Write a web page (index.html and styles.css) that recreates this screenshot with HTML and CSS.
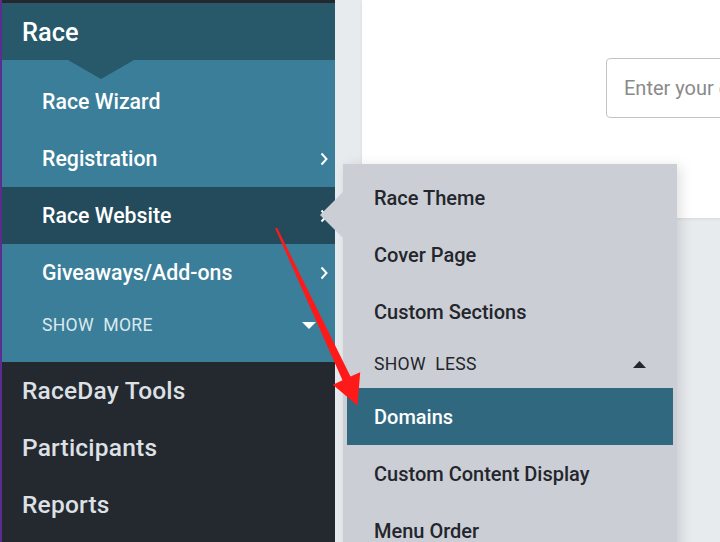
FILE: index.html
```html
<!DOCTYPE html>
<html>
<head>
<meta charset="utf-8">
<link rel="stylesheet" href="styles.css">
</head>
<body>
<div class="app">
  <nav class="sidebar">
    <div class="topstrip"></div>
    <div class="group-head">Race</div>
    <ul class="submenu">
      <li class="sub-item">Race Wizard</li>
      <li class="sub-item">Registration
        <svg class="chev" width="8" height="14" viewBox="0 0 8 14"><path d="M1.5 1.5 L6.5 7 L1.5 12.5" fill="none" stroke="#fff" stroke-width="2"/></svg>
      </li>
      <li class="sub-item active">Race Website
        <svg class="chev" width="8" height="14" viewBox="0 0 8 14"><path d="M1.5 1.5 L6.5 7 L1.5 12.5" fill="none" stroke="#fff" stroke-width="2"/></svg>
      </li>
      <li class="sub-item">Giveaways/Add-ons
        <svg class="chev" width="8" height="14" viewBox="0 0 8 14"><path d="M1.5 1.5 L6.5 7 L1.5 12.5" fill="none" stroke="#fff" stroke-width="2"/></svg>
      </li>
      <li class="sub-toggle">SHOW&nbsp; MORE
        <svg class="caret" width="14" height="7" viewBox="0 0 14 7"><path d="M0 0 L14 0 L7 7 Z" fill="#fff"/></svg>
      </li>
    </ul>
    <ul class="mainmenu">
      <li class="main-item">RaceDay Tools</li>
      <li class="main-item">Participants</li>
      <li class="main-item">Reports</li>
    </ul>
  </nav>
  <main class="content">
    <section class="card">
      <div class="field"><span class="placeholder">Enter your email address</span></div>
    </section>
  </main>
</div>

<div class="flyout">
  <ul class="fly-list">
    <li class="fly-item">Race Theme</li>
    <li class="fly-item">Cover Page</li>
    <li class="fly-item">Custom Sections</li>
    <li class="fly-toggle">SHOW&nbsp; LESS
      <svg class="caret" width="13" height="7" viewBox="0 0 13 7"><path d="M0 7 L13 7 L6.5 0 Z" fill="#23262c"/></svg>
    </li>
    <li class="fly-item current">Domains</li>
    <li class="fly-item">Custom Content Display</li>
    <li class="fly-item">Menu Order</li>
  </ul>
</div>

<svg class="arrow" width="720" height="542" viewBox="0 0 720 542">
  <polygon points="275.2,228.4 277.0,227.6 350.5,376.6 360.2,372.2 357.5,405.5 332.8,384.8 342.5,380.2" fill="#ff1a1a"/>
</svg>
</body>
</html>
```

FILE: styles.css
```css
* { box-sizing: border-box; }
html, body { margin: 0; padding: 0; }
body {
  width: 720px;
  height: 542px;
  overflow: hidden;
  position: relative;
  font-family: Roboto, "Liberation Sans", sans-serif;
  background: #e8ebee;
}
ul { list-style: none; margin: 0; padding: 0; }

.app {
  display: flex;
  height: 542px;
}

.sidebar {
  width: 335px;
  flex: none;
  border-left: 2px solid #5a2d8e;
  background: #24282f;
  display: flex;
  flex-direction: column;
}
.topstrip {
  height: 3px;
  background: #23272e;
}
.group-head {
  position: relative;
  height: 57px;
  background: #27596b;
  color: #fff;
  font-size: 25.4px;
  font-weight: 500;
  display: flex;
  align-items: center;
  padding-left: 20px;
}
.group-head::after {
  content: "";
  position: absolute;
  left: 66px;
  top: 57px;
  border-left: 33px solid transparent;
  border-right: 33px solid transparent;
  border-top: 19px solid #27596b;
}

.submenu {
  background: #3a7e99;
  padding: 13px 0 13px;
}
.sub-item {
  height: 57px;
  display: flex;
  align-items: center;
  justify-content: space-between;
  padding: 0 7px 0 40px;
  color: #fff;
  font-size: 21.3px;
  font-weight: 500;
}
.sub-item.active { background: #234b5c; }
.sub-toggle {
  height: 48px;
  display: flex;
  align-items: center;
  justify-content: space-between;
  padding: 0 19px 0 40px;
  color: #dbe9ef;
  font-size: 17.6px;
  letter-spacing: 0.3px;
}

.mainmenu { flex: 1; }
.main-item {
  height: 57px;
  display: flex;
  align-items: center;
  padding-left: 20px;
  color: #dde0e4;
  font-size: 24.5px;
  font-weight: 500;
  letter-spacing: 0.2px;
}

.content {
  flex: 1;
  padding-left: 27px;
  background: #e8ebee;
}
.card {
  height: 218px;
  background: #fff;
  box-shadow: 0 1px 3px rgba(0,0,0,0.08);
  padding: 58px 0 0 244px;
  overflow: hidden;
}
.field {
  width: 300px;
  height: 60px;
  border: 1px solid #c4c4c4;
  border-radius: 4px;
  display: flex;
  align-items: center;
  padding-left: 17px;
  white-space: nowrap;
}
.placeholder {
  color: #8a8a8a;
  font-size: 20px;
}

.flyout {
  position: absolute;
  left: 343px;
  top: 164px;
  width: 334px;
  height: 400px;
  background: #cbced4;
  box-shadow: 4px 2px 12px rgba(0,0,0,0.12);
  padding: 5px 4px 0;
}
.flyout::before {
  content: "";
  position: absolute;
  left: -23px;
  top: 28px;
  border-top: 23px solid transparent;
  border-bottom: 23px solid transparent;
  border-right: 23px solid #cbced4;
}
.fly-item {
  height: 57px;
  display: flex;
  align-items: center;
  padding-left: 27px;
  color: #23262c;
  font-size: 20px;
  font-weight: 500;
}
.fly-item.current {
  background: #30697f;
  color: #fff;
}
.fly-toggle {
  height: 48px;
  display: flex;
  align-items: center;
  justify-content: space-between;
  padding: 0 27px 0 27px;
  color: #23262c;
  font-size: 17.6px;
  letter-spacing: 0.3px;
}

.arrow {
  position: absolute;
  left: 0;
  top: 0;
  pointer-events: none;
}
```
